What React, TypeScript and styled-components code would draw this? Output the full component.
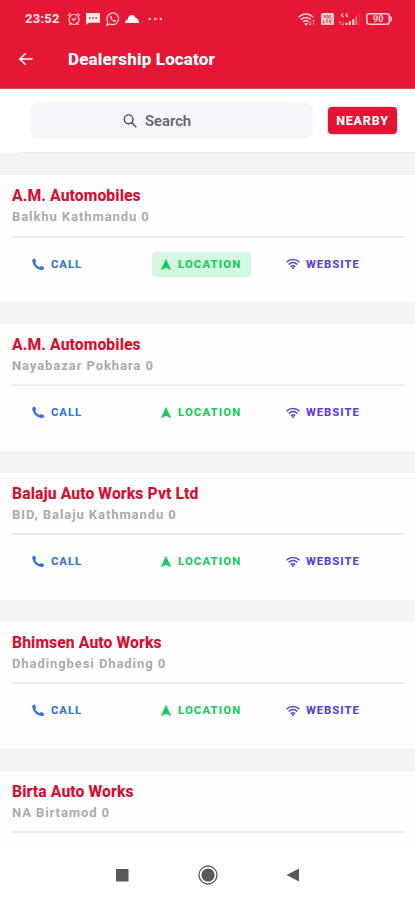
import React from "react";
import styled, { createGlobalStyle } from "styled-components";

const GlobalStyle = createGlobalStyle`
  * { box-sizing: border-box; }
  body { margin: 0; background: #fff; font-family: Roboto, "Liberation Sans", sans-serif; }
  svg { display: block; flex: none; }
`;

const Screen = styled.div`
  width: 415px;
  height: 900px;
  display: flex;
  flex-direction: column;
  overflow: hidden;
  background: #f4f4f4;
`;

const Header = styled.header`
  flex: none;
  height: 89px;
  background: #e51735;
  border-bottom: 1px solid #db4a62;
  color: #fff;
`;

const StatusBar = styled.div`
  height: 38px;
  padding: 0 22px 0 25px;
  display: flex;
  justify-content: space-between;
  align-items: center;
  color: #fbd0d3;
`;

const StatusGroup = styled.div<{ $gap: number }>`
  display: flex;
  align-items: center;
  gap: ${(p) => p.$gap}px;
`;

const Clock = styled.span`
  width: 34px;
  font-size: 13px;
  line-height: 16px;
  font-weight: 700;
  letter-spacing: 0.25px;
  margin-right: 2px;
  color: #fde6e6;
`;

const TitleBar = styled.div`
  height: 42px;
  padding-left: 18px;
  display: flex;
  align-items: center;
  gap: 34px;
`;

const Title = styled.h1`
  margin: 0;
  font-size: 17px;
  line-height: 20px;
  font-weight: 800;
  letter-spacing: 0.15px;
`;

const SearchBar = styled.div`
  flex: none;
  height: 63px;
  padding: 13px 18px 0 30px;
  display: flex;
  align-items: flex-start;
  gap: 15px;
  background: #fff;
`;

const SearchField = styled.div`
  width: 283px;
  height: 37px;
  border-radius: 9px;
  background: #f4f6fa;
  color: #65686d;
  display: flex;
  align-items: center;
  padding-left: 93px;
  gap: 8px;
  font-size: 14.8px;
  font-weight: 600;
`;

const NearbyButton = styled.button`
  margin: 5px 0 0;
  width: 69px;
  height: 27px;
  padding: 0;
  border: 0;
  border-radius: 4px;
  background: #e21536;
  box-shadow: 0 0 2px rgba(226, 21, 54, 0.5);
  color: #fff;
  font: 800 12.5px/27px Roboto, sans-serif;
  letter-spacing: 0.8px;
  white-space: nowrap;
`;

const Rule = styled.div`
  flex: none;
  height: 1px;
  background: linear-gradient(to right, #fff 18px, #ececec 18px);
`;

const List = styled.main`
  flex: 1;
  min-height: 0;
  overflow: hidden;
  display: flex;
  flex-direction: column;
  gap: 21.9px;
  padding-top: 22px;
`;

const Card = styled.article`
  flex: none;
  height: 127px;
  padding: 11px 10px 0 12px;
  background: #fefefe;
`;

const Name = styled.h2`
  margin: 0;
  font-size: 15.7px;
  line-height: 20px;
  font-weight: 800;
  letter-spacing: 0.1px;
  color: #d60f31;
  white-space: nowrap;
`;

const Address = styled.p`
  margin: 0;
  font-size: 13px;
  line-height: 21px;
  font-weight: 700;
  letter-spacing: 0.92px;
  color: #ababab;
`;

const Divider = styled.div`
  height: 2px;
  margin-top: 8.5px;
  background: #ededed;
`;

const Actions = styled.div`
  display: grid;
  grid-template-columns: 140px 126px 1fr;
  padding-top: 14px;
`;

const Action = styled.button<{ $color: string; $active?: boolean; $inset: number; $tracking?: number }>`
  justify-self: start;
  height: 25px;
  padding: 0 9.5px 0 ${(p) => p.$inset}px;
  display: flex;
  align-items: center;
  gap: 6px;
  border: 0;
  border-radius: 4px;
  background: ${(p) => (p.$active ? "#d5f8e2" : "transparent")};
  color: ${(p) => p.$color};
  font: 800 11.3px/25px Roboto, sans-serif;
  letter-spacing: ${(p) => p.$tracking ?? 0.95}px;
`;

const NavBar = styled.nav`
  flex: none;
  height: 50px;
  background: #fff;
  display: flex;
  align-items: center;
  padding: 0 0 0 114px;
  gap: 68px;
  color: #595959;
`;

const AlarmIcon = () => (
  <svg width="14" height="14" viewBox="0 0 14 14" fill="none" stroke="currentColor" strokeWidth="1.2">
    <circle cx="7" cy="7.5" r="5" />
    <path d="M5 6.5l1.8 1.8L9 6M1 3.6L3.6 1.3M13 3.6L10.4 1.3M3.3 11.6L2.2 13M10.7 11.6l1.1 1.4" />
  </svg>
);

const MessageIcon = () => (
  <svg width="14" height="12" viewBox="0 0 14 12" fill="#fde6e6">
    <path fillRule="evenodd" d="M0 0h14v9.8H3L0 12zM3 4.2v1.6h1.6V4.2zm3.2 0v1.6h1.6V4.2zm3.2 0v1.6H11V4.2z" />
  </svg>
);

const WhatsAppIcon = () => (
  <svg width="14" height="14" viewBox="0 0 14 14" fill="none" stroke="currentColor" strokeWidth="1.2">
    <path d="M1 13l.8-3.2A5.8 5.8 0 1 1 4.2 12z" />
    <path d="M4.3 4.1l1-.4.9 1.8-.6.8c.5 1 1.1 1.6 2.1 2.1l.8-.8 1.7.9-.4 1.1c-2.5 1.3-6.3-2.6-5.5-5.5z" fill="currentColor" stroke="none" />
  </svg>
);

const CloudIcon = () => (
  <svg width="14" height="8" viewBox="0 0 14 8" fill="#fff">
    <path d="M0 8C0 6 1 5 2.5 4.8 3.1 2 4.6 0 7 0c2.1 0 3 1.4 3.5 3C12.5 3 14 5 14 8z" />
  </svg>
);

const MoreIcon = () => (
  <svg width="15" height="4" viewBox="0 0 15 4" fill="currentColor">
    <circle cx="1.8" cy="2" r="1.3" />
    <circle cx="7.3" cy="2" r="1.3" />
    <circle cx="12.8" cy="2" r="1.3" />
  </svg>
);

const StatusWifiIcon = () => (
  <svg width="18" height="13" viewBox="0 0 18 13" fill="none" stroke="currentColor" strokeWidth="1.5">
    <path d="M.7 4.2c4.3-4.3 10.2-4.3 14.5 0M3 6.6c3-2.9 7-2.9 9.8 0M5.3 8.9c1.6-1.5 3.7-1.5 5.2 0" />
    <path d="M6 10.2h4L8 12.7z" fill="currentColor" stroke="none" />
    <path d="M12.2 8v4M10.8 10.5l1.4 1.6 1.4-1.6M15.6 12V7M14.2 8.5L15.6 7 17 8.5" strokeWidth=".8" opacity=".75" />
  </svg>
);

const VolteIcon = () => (
  <svg width="13" height="12" viewBox="0 0 13 12">
    <rect width="13" height="12" rx="1.5" fill="currentColor" />
    <path d="M2.5 2l1.2 3L5 2M6 2.3h1.7V5H6zM9.2 2v3h1.7M2.5 7v3h1.6M5 7h2.2M6.1 7v3M10.5 7H8.6v3h1.9M8.6 8.5h1.7" fill="none" stroke="#e5415a" strokeWidth=".9" />
  </svg>
);

const SignalIcon = () => (
  <svg width="22" height="13" viewBox="0 0 22 13" fill="currentColor">
    <path d="M4.2 0L2 3h2.3v1.4M9 .7C6.4-.5 5.8 4 8.9 3.8V2.4H7.8" fill="none" stroke="currentColor" strokeWidth="1" />
    <path d="M1 12V8.5M0 9.8l1-1.3 1 1.3M4 8.5V12M3 10.8L4 12l1-1.2" fill="none" stroke="currentColor" strokeWidth=".7" opacity=".7" />
    <path d="M6.5 9.7h2.2V12H6.5zM9.8 8.3H12V12H9.8zM13.2 6h2.2v6h-2.2z" />
    <path d="M16.4 3.6h1.8V12h-1.8z" opacity=".5" />
    <path d="M19.4 1h1.8v11h-1.8z" opacity=".15" />
  </svg>
);

const Battery = styled.div`
  width: 27px;
  height: 12px;
  display: grid;
  align-items: center;
`;

const BatteryShape = styled.svg`
  grid-area: 1 / 1;
`;

const BatteryLevel = styled.span`
  grid-area: 1 / 1;
  padding-left: 7px;
  font-size: 9px;
  line-height: 12px;
  font-weight: 700;
`;

const BackIcon = () => (
  <svg width="16" height="16" viewBox="0 0 16 16" fill="none" stroke="currentColor" strokeWidth="1.6">
    <path d="M14.5 8H2M7.7 2.2L1.9 8l5.8 5.8" />
  </svg>
);

const SearchIcon = () => (
  <svg width="14" height="14" viewBox="0 0 14 14" fill="none" stroke="#4a4c50" strokeWidth="1.4">
    <circle cx="5.6" cy="5.3" r="4.4" />
    <path d="M8.8 8.7l4.5 4.5" />
  </svg>
);

const PhoneIcon = () => (
  <svg width="13" height="13" viewBox="0 0 13 13" fill="currentColor">
    <path d="M.6 1.4L2.1.6c.5-.2.8 0 1 .4l1 2.3c.1.4 0 .7-.2.9l-.7.8c1 2 2.6 3.5 4.7 4.2l.8-.9c.3-.3.6-.3 1-.1l2.2 1.1c.4.2.5.6.3 1l-.8 1.3c-.3.4-.7.6-1.2.5C5 11.7.8 7.8.2 2.5c0-.5 0-.8.4-1.1z" />
  </svg>
);

const LocationIcon = () => (
  <svg width="12" height="13" viewBox="0 0 12 13" fill="currentColor">
    <path d="M6 .7L11.3 12.3 6 9.8.7 12.3z" />
  </svg>
);

const WifiIcon = () => (
  <svg width="14" height="12" viewBox="0 0 15 12" fill="none" stroke="currentColor" strokeWidth="1.5">
    <path d="M.6 4c4-3.7 9.8-3.7 13.8 0M2.8 6.6c2.8-2.5 6.6-2.5 9.4 0M5.1 8.9c1.5-1.3 3.3-1.3 4.8 0" />
    <path d="M5.7 9.6h3.6L7.5 12z" fill="currentColor" stroke="none" />
  </svg>
);

const dealers = [
  { name: "A.M. Automobiles", address: "Balkhu Kathmandu 0", located: true },
  { name: "A.M. Automobiles", address: "Nayabazar Pokhara 0" },
  { name: "Balaju Auto Works Pvt Ltd", address: "BID, Balaju Kathmandu 0" },
  { name: "Bhimsen Auto Works", address: "Dhadingbesi Dhading 0" },
  { name: "Birta Auto Works", address: "NA Birtamod 0", collapsed: true },
];

export default function App() {
  return (
    <Screen>
      <GlobalStyle />
      <Header>
        <StatusBar>
          <StatusGroup $gap={5.5}>
            <Clock>23:52</Clock>
            <AlarmIcon />
            <MessageIcon />
            <WhatsAppIcon />
            <CloudIcon />
            <StatusGroup $gap={0}>&nbsp;<MoreIcon /></StatusGroup>
          </StatusGroup>
          <StatusGroup $gap={5}>
            <StatusWifiIcon />
            <VolteIcon />
            <SignalIcon />
            <Battery>
              <BatteryShape width="27" height="12" viewBox="0 0 27 12" fill="none" stroke="currentColor" strokeWidth="1.5">
                <rect x=".8" y=".8" width="22.4" height="10.4" rx="2.5" />
                <path d="M24.2 2.8L26 4.2v3.6l-1.8 1.4z" fill="currentColor" stroke="none" />
              </BatteryShape>
              <BatteryLevel>90</BatteryLevel>
            </Battery>
          </StatusGroup>
        </StatusBar>
        <TitleBar>
          <BackIcon />
          <Title>Dealership Locator</Title>
        </TitleBar>
      </Header>
      <SearchBar>
        <SearchField>
          <SearchIcon />
          Search
        </SearchField>
        <NearbyButton>NEARBY</NearbyButton>
      </SearchBar>
      <Rule />
      <List>
        {dealers.map((d, i) => (
          <Card key={i}>
            <Name>{d.name}</Name>
            <Address>{d.address}</Address>
            <Divider />
            {!d.collapsed && (
              <Actions>
                <Action $color="#3474dc" $inset={20}><PhoneIcon />CALL</Action>
                <Action $color="#18cb60" $inset={8} $tracking={1.15} $active={d.located}><LocationIcon />LOCATION</Action>
                <Action $color="#5b43d3" $inset={8}><WifiIcon />WEBSITE</Action>
              </Actions>
            )}
          </Card>
        ))}
      </List>
      <NavBar>
        <svg width="16" height="16" viewBox="0 0 16 16" fill="currentColor"><path d="M2 2h12.5v12.5H2z" /></svg>
        <svg width="20" height="20" viewBox="0 0 20 20"><circle cx="10" cy="10" r="9" fill="none" stroke="currentColor" strokeWidth="1.3" /><circle cx="10" cy="10" r="6.6" fill="currentColor" /></svg>
        <svg width="14" height="16" viewBox="0 0 14 16" fill="currentColor"><path d="M13 1.5v13L.5 8z" /></svg>
      </NavBar>
    </Screen>
  );
}
